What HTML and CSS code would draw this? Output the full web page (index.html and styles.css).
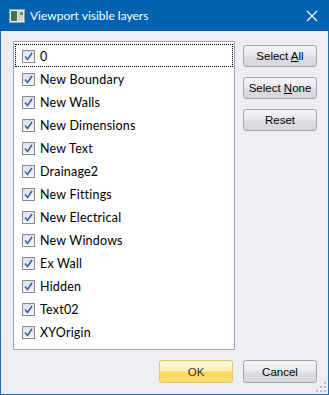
FILE: index.html
```html
<!DOCTYPE html>
<html lang="en">
<head>
  <meta charset="UTF-8">
  <title>Viewport visible layers</title>
  <link rel="stylesheet" href="styles.css">
</head>
<body>

  <div class="janela">
    <div class="titulo">
      <svg class="icone" width="16" height="14" viewBox="0 0 16 14">
        <rect x="0.5" y="0.5" width="15" height="13" fill="#e8ece8" stroke="#9aa0a0"/>
        <rect x="2" y="2" width="6" height="10" fill="#3c7a5a"/>
        <rect x="9" y="2" width="5" height="10" fill="#cfd6d2"/>
        <rect x="11" y="3" width="3" height="3" fill="#5a9a6a"/>
      </svg>
      <span class="texto-titulo">Viewport visible layers</span>
      <svg class="fechar" width="12" height="12" viewBox="0 0 12 12">
        <path d="M1 1 L11 11 M11 1 L1 11" stroke="#fff" stroke-width="1.2"/>
      </svg>
    </div>

    <div class="conteudo">
      <div class="linha">
        <ul class="lista" id="lista"></ul>

        <div class="botoes">
          <button class="btn">Select <u>A</u>ll</button>
          <button class="btn">Select <u>N</u>one</button>
          <button class="btn">Reset</button>
        </div>
      </div>

      <div class="rodape">
        <button class="btn btn-ok">OK</button>
        <button class="btn">Cancel</button>
      </div>
    </div>

    <div class="grip">
      <svg width="10" height="10" viewBox="0 0 10 10">
        <rect x="8" y="0" width="2" height="2" fill="#b8b8c0"/>
        <rect x="4" y="4" width="2" height="2" fill="#b8b8c0"/>
        <rect x="8" y="4" width="2" height="2" fill="#b8b8c0"/>
        <rect x="0" y="8" width="2" height="2" fill="#b8b8c0"/>
        <rect x="4" y="8" width="2" height="2" fill="#b8b8c0"/>
        <rect x="8" y="8" width="2" height="2" fill="#b8b8c0"/>
      </svg>
    </div>
  </div>

  <script>
    const camadas = ["0", "New Boundary", "New Walls", "New Dimensions", "New Text",
      "Drainage2", "New Fittings", "New Electrical", "New Windows", "Ex Wall",
      "Hidden", "Text02", "XYOrigin"];
    const lista = document.getElementById("lista");

    camadas.forEach((nome, index) => {
      const li = document.createElement("li");
      if (index === 0) li.className = "foco";
      li.innerHTML = `
        <span class="caixa">
          <svg width="9" height="9" viewBox="0 0 9 9">
            <path d="M1 4.5 L3.5 7.5 L8 1" fill="none" stroke="#3d5fa8" stroke-width="1.6"/>
          </svg>
        </span>
        <span>${nome}</span>
      `;
      lista.appendChild(li);
    });
  </script>

</body>
</html>
```

FILE: styles.css
```css
body {
  margin: 0;
  font-family: Lato, "Noto Sans", Arial, sans-serif;
  font-size: 12px;
}

.janela {
  position: relative;
  width: 329px;
  height: 395px;
  box-sizing: border-box;
  border: 1px solid #1a6fb9;
  border-top: none;
  background-color: #efeff3;
}

.titulo {
  height: 31px;
  margin: 0 -1px;
  background-color: #0063b1;
  display: flex;
  align-items: center;
  color: white;
}

.icone {
  margin-left: 9px;
  margin-right: 5px;
}

.texto-titulo {
  flex: 1;
  font-size: 12px;
}

.fechar {
  margin-right: 11px;
}

.conteudo {
  padding: 10px 10px 0 12px;
}

.linha {
  display: flex;
}

.lista {
  width: 222px;
  height: 309px;
  box-sizing: border-box;
  margin: 0;
  padding: 2px 1px;
  list-style: none;
  background: white;
  border: 1px solid #a6a6a6;
}

.lista li {
  height: 23px;
  box-sizing: border-box;
  display: flex;
  align-items: center;
  padding-left: 6px;
  padding-top: 2px;
  color: #000;
  font-size: 12.5px;
  letter-spacing: 0.2px;
  border: 1px dotted transparent;
}

.lista li.foco {
  border-color: #000;
}

.caixa {
  width: 11px;
  height: 11px;
  border: 1px solid #8a8a8a;
  background: linear-gradient(#dde3ee, #f4f6fa);
  display: flex;
  align-items: center;
  justify-content: center;
  margin-right: 5px;
}

.botoes {
  display: flex;
  flex-direction: column;
  gap: 10px;
  margin-left: 8px;
  padding-top: 4px;
}

.btn {
  width: 74px;
  height: 22px;
  padding: 0;
  font-family: "Liberation Sans", Arial, sans-serif;
  font-size: 11.5px;
  color: #000;
  border: 1px solid #a3a3a8;
  border-radius: 3px;
  background: linear-gradient(#f5f5f7 0%, #eaeaee 45%, #dcdce2 55%, #d6d6dc 100%);
}

.rodape {
  display: flex;
  justify-content: flex-end;
  gap: 10px;
  margin-top: 10px;
  padding-right: 1px;
}

.rodape .btn {
  height: 23px;
}

.btn-ok {
  border-color: #e6c76a;
  background: linear-gradient(#fff8dc 0%, #fff0b8 45%, #ffd75a 55%, #ffdf7a 100%);
  color: #333;
}

.grip {
  position: absolute;
  right: 2px;
  bottom: 2px;
  line-height: 0;
}
```
